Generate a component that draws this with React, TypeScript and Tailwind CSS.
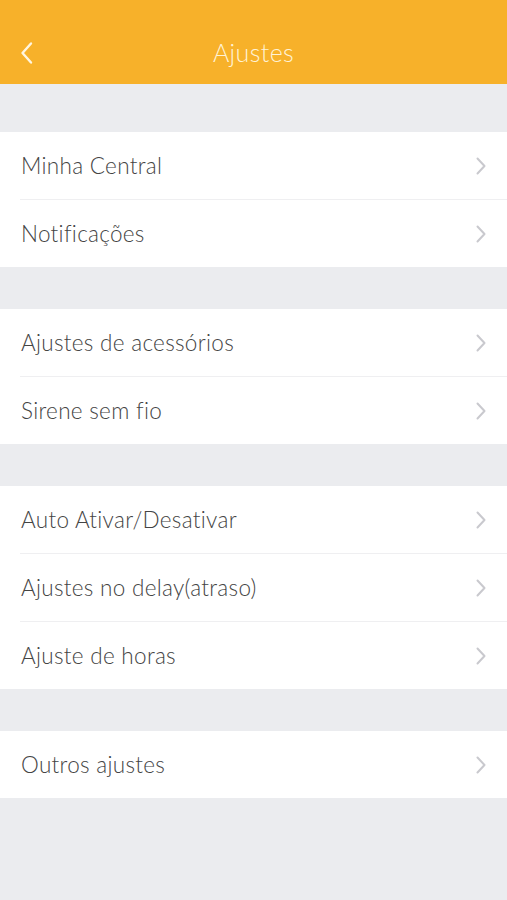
import React from "react";

const Chevron = () => (
  <svg width="12" height="18" viewBox="0 0 12 18" fill="none" className="shrink-0">
    <path d="M2.5 1.5 L9.5 9 L2.5 16.5" stroke="#C9C9CE" strokeWidth="2" strokeLinecap="round" strokeLinejoin="round" />
  </svg>
);

const groups = [
  ["Minha Central", "Notificações"],
  ["Ajustes de acessórios", "Sirene sem fio"],
  ["Auto Ativar/Desativar", "Ajustes no delay(atraso)", "Ajuste de horas"],
  ["Outros ajustes"],
];

export default function App() {
  return (
    <div
      className="w-[507px] h-[900px] bg-[#EBECEF] flex flex-col overflow-hidden"
      style={{ fontFamily: "Lato, 'Noto Sans', sans-serif" }}
    >
      <div className="h-[84px] bg-[#F7B12A] flex items-end pb-[11px] relative shrink-0">
        <div className="w-full flex items-center h-[40px] px-[20px]">
          <svg width="14" height="24" viewBox="0 0 14 24" fill="none">
            <path d="M11 2.5 L2.5 12 L11 21.5" stroke="#FFF6E0" strokeWidth="2.4" strokeLinecap="round" strokeLinejoin="round" />
          </svg>
          <div className="flex-1 text-center text-[25px] font-light text-[#FFF3D6] pr-[14px] tracking-[0.4px]">Ajustes</div>
        </div>
      </div>
      <div className="h-[48px] shrink-0" />
      <div className="flex flex-col gap-[42px]">
        {groups.map((g, gi) => (
          <div key={gi} className="bg-white flex flex-col">
            {g.map((item, i) => (
              <div key={i} className="flex flex-col">
                {i > 0 && <div className="h-px bg-[#EFEFF1] ml-[20px]" />}
                <div className="h-[67px] flex items-center pl-[21px] pr-[20px]">
                  <span className="flex-1 text-[22.5px] font-light text-[#444] tracking-[0.3px]">{item}</span>
                  <Chevron />
                </div>
              </div>
            ))}
          </div>
        ))}
      </div>
    </div>
  );
}
